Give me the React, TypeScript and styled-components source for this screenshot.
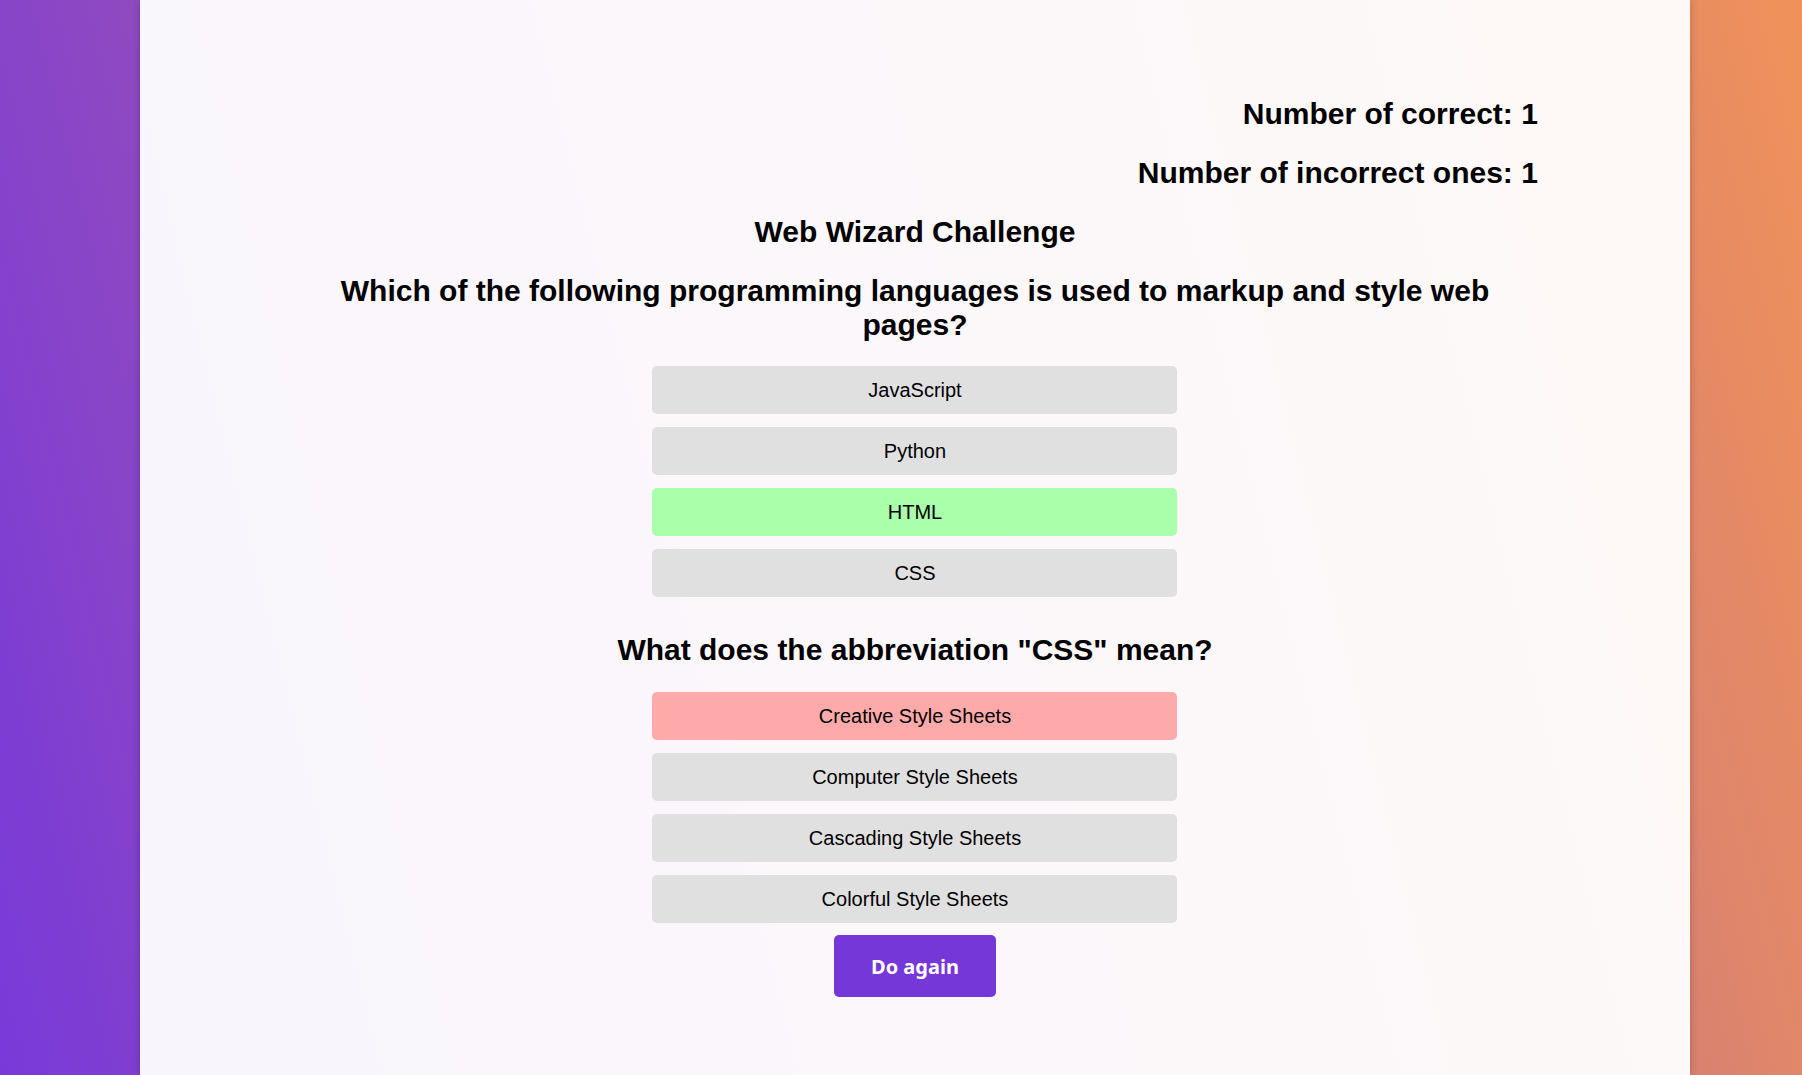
import React from "react";
import styled, { createGlobalStyle } from "styled-components";

const GlobalStyle = createGlobalStyle`
  html, body {
    margin: 0;
    padding: 0;
  }
  body {
    min-height: 100vh;
    font-family: "Liberation Sans", Arial, sans-serif;
    color: #000;
    background: linear-gradient(76deg, #7839d9 0%, #f09259 100%);
    background-attachment: fixed;
  }
`;

const Panel = styled.main`
  box-sizing: border-box;
  width: 86%;
  min-height: 100vh;
  margin: 0 0 0 calc(7% + 14px);
  padding: 72px 152px 40px;
  background: rgba(255, 255, 255, 0.95);
  box-shadow: 0 0 8px rgba(0, 0, 0, 0.22);
`;

const Heading = styled.h2<{ $align?: "left" | "center" | "right" }>`
  font-family: "Liberation Sans", Arial, sans-serif;
  font-size: 30px;
  font-weight: 700;
  line-height: normal;
  margin: 24.9px 0;
  text-align: ${(p) => p.$align ?? "center"};
`;

const QuizSection = styled.section`
  &:not(:last-of-type) {
    margin-bottom: 36.5px;
  }
`;

const OptionList = styled.div`
  display: flex;
  flex-direction: column;
  align-items: center;
  gap: 12.8px;
`;

type State = "neutral" | "correct" | "wrong";

const optionColors: Record<State, string> = {
  neutral: "#e0e0e0",
  correct: "#aaffaa",
  wrong: "#ffaaaa",
};

const OptionButton = styled.button<{ $state: State }>`
  box-sizing: border-box;
  width: 525px;
  height: 48px;
  padding: 0 12px;
  border: none;
  border-radius: 5px;
  background: ${(p) => optionColors[p.$state]};
  color: #000;
  font-family: "Liberation Sans", Arial, sans-serif;
  font-size: 20px;
  line-height: 24px;
  cursor: pointer;
`;

const Actions = styled.div`
  display: flex;
  justify-content: center;
  margin-top: 12.7px;
`;

const RestartButton = styled.button`
  box-sizing: border-box;
  height: 62px;
  padding: 0 37px;
  border: none;
  border-radius: 5px;
  background: #7537d8;
  color: #fff;
  font-family: "Noto Sans", "Open Sans", sans-serif;
  font-size: 20px;
  font-weight: 700;
  cursor: pointer;
`;

const questions: { text: string; options: { label: string; state: State }[] }[] = [
  {
    text: "Which of the following programming languages is used to markup and style web pages?",
    options: [
      { label: "JavaScript", state: "neutral" },
      { label: "Python", state: "neutral" },
      { label: "HTML", state: "correct" },
      { label: "CSS", state: "neutral" },
    ],
  },
  {
    text: 'What does the abbreviation "CSS" mean?',
    options: [
      { label: "Creative Style Sheets", state: "wrong" },
      { label: "Computer Style Sheets", state: "neutral" },
      { label: "Cascading Style Sheets", state: "neutral" },
      { label: "Colorful Style Sheets", state: "neutral" },
    ],
  },
];

export default function App() {
  return (
    <>
      <GlobalStyle />
      <Panel>
        <Heading $align="right">Number of correct: 1</Heading>
        <Heading $align="right">Number of incorrect ones: 1</Heading>
        <Heading>Web Wizard Challenge</Heading>
        <div>
          {questions.map((q) => (
            <QuizSection key={q.text}>
              <Heading>{q.text}</Heading>
              <OptionList>
                {q.options.map((o) => (
                  <OptionButton key={o.label} $state={o.state}>
                    {o.label}
                  </OptionButton>
                ))}
              </OptionList>
            </QuizSection>
          ))}
        </div>
        <Actions>
          <RestartButton>Do again</RestartButton>
        </Actions>
      </Panel>
    </>
  );
}
